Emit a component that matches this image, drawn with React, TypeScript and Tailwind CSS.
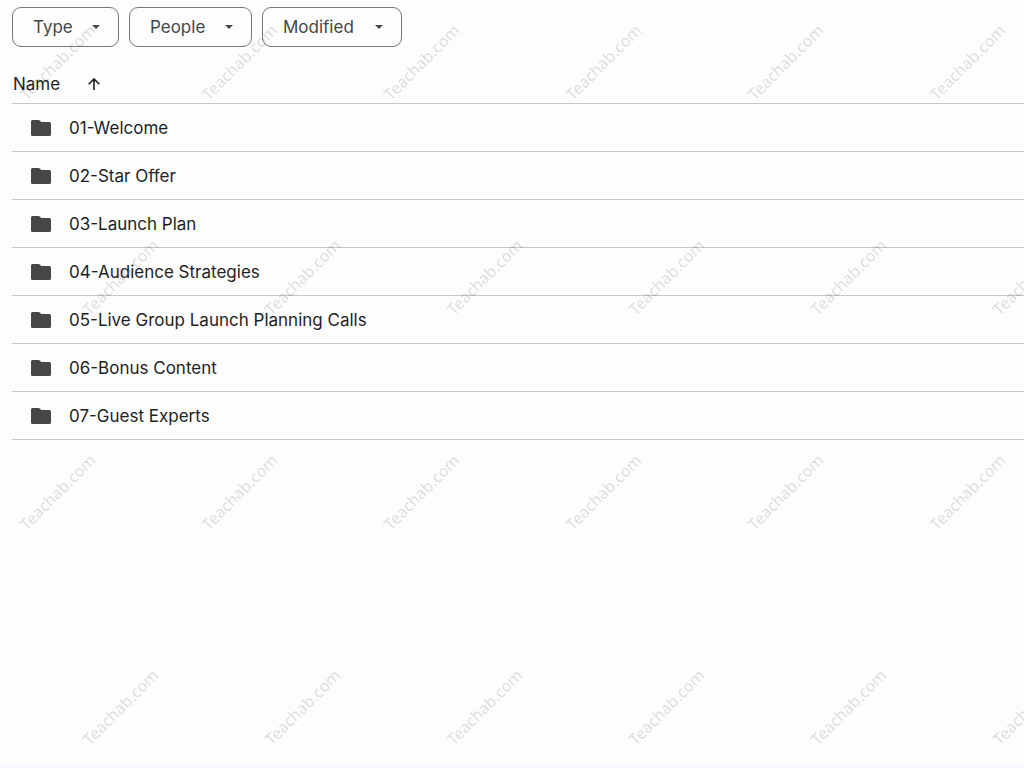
import { useState } from "react";

const filters = [
  { label: "Type", width: "w-[107px]" },
  { label: "People", width: "w-[123px]" },
  { label: "Modified", width: "w-[140px]" },
];

const folders = [
  "01-Welcome",
  "02-Star Offer",
  "03-Launch Plan",
  "04-Audience Strategies",
  "05-Live Group Launch Planning Calls",
  "06-Bonus Content",
  "07-Guest Experts",
];

function FolderIcon() {
  return (
    <svg width="20" height="16" viewBox="0 0 20 16" aria-hidden="true">
      <path
        d="M1.6 0h5.8c.5 0 .9.2 1.3.5L10.2 2h8.2A1.6 1.6 0 0 1 20 3.6v10.8a1.6 1.6 0 0 1-1.6 1.6H1.6A1.6 1.6 0 0 1 0 14.4V1.6A1.6 1.6 0 0 1 1.6 0z"
        fill="#444746"
      />
    </svg>
  );
}

function CaretIcon() {
  return (
    <svg width="8" height="4" viewBox="0 0 8 4" aria-hidden="true">
      <path d="M0 0h8L4 4z" fill="#444746" />
    </svg>
  );
}

function ArrowUpIcon() {
  return (
    <svg width="12" height="12" viewBox="0 0 12 12" aria-hidden="true">
      <path
        d="M6 12V1M.7 6.3 6 1l5.3 5.3"
        fill="none"
        stroke="#1f1f1f"
        strokeWidth="1.6"
      />
    </svg>
  );
}

function Watermark() {
  // enough marks to cover the window
  const rows = Array.from({ length: Math.ceil(window.innerHeight / 215) }, (_, i) => i);
  const cols = Array.from({ length: Math.ceil(window.innerWidth / 182) }, (_, i) => i);

  return (
    <div className="absolute inset-0 overflow-hidden pointer-events-none select-none">
      <div className="-mt-[46px]" aria-hidden="true">
        {rows.map((row) => (
          <div
            key={row}
            className={`flex h-[215px] ${row % 2 ? "ml-[29px]" : "-ml-[34px]"}`}
          >
            {cols.map((col) => (
              <div
                key={col}
                className="flex w-[182px] shrink-0 items-center justify-center"
              >
                <span className="-rotate-45 font-['Noto_Sans',sans-serif] text-base text-black/15">
                  Teachab.com
                </span>
              </div>
            ))}
          </div>
        ))}
      </div>
    </div>
  );
}

export default function App() {
  const [descending, setDescending] = useState(false);
  const rows = descending ? [...folders].reverse() : folders;

  return (
    <div className="relative flex min-h-screen flex-col bg-[#fdfdfd] font-['Inter',sans-serif] text-[17px] text-[#1f1f1f]">
      <main className="flex-1 pl-3 pt-[7px]">
        <div className="flex gap-2.5">
          {filters.map((filter) => (
            <button
              key={filter.label}
              type="button"
              className={`flex h-10 items-center justify-between rounded-[9px] border border-[#747775] pl-5 pr-[18px] leading-7 text-[#444746] ${filter.width}`}
            >
              {filter.label}
              <CaretIcon />
            </button>
          ))}
        </div>

        <table className="mt-4 w-full border-collapse text-left">
          <thead>
            <tr className="h-10 border-b border-[#c7c7c7]">
              <th scope="col" className="p-0 pt-[3px] font-normal">
                <button
                  type="button"
                  className="flex items-center gap-7 pl-px leading-7"
                  onClick={() => setDescending(!descending)}
                >
                  Name
                  <span className={descending ? "rotate-180" : ""}>
                    <ArrowUpIcon />
                  </span>
                </button>
              </th>
            </tr>
          </thead>
          <tbody>
            {rows.map((name) => (
              <tr key={name} className="h-12 border-b border-[#c7c7c7]">
                <td className="p-0 pt-px">
                  <a href="#" className="flex items-center gap-[18px] pl-[19px] leading-7">
                    <FolderIcon />
                    {name}
                  </a>
                </td>
              </tr>
            ))}
          </tbody>
        </table>
      </main>
      <div className="h-1 bg-[#f8f8ff]" />
      <Watermark />
    </div>
  );
}
